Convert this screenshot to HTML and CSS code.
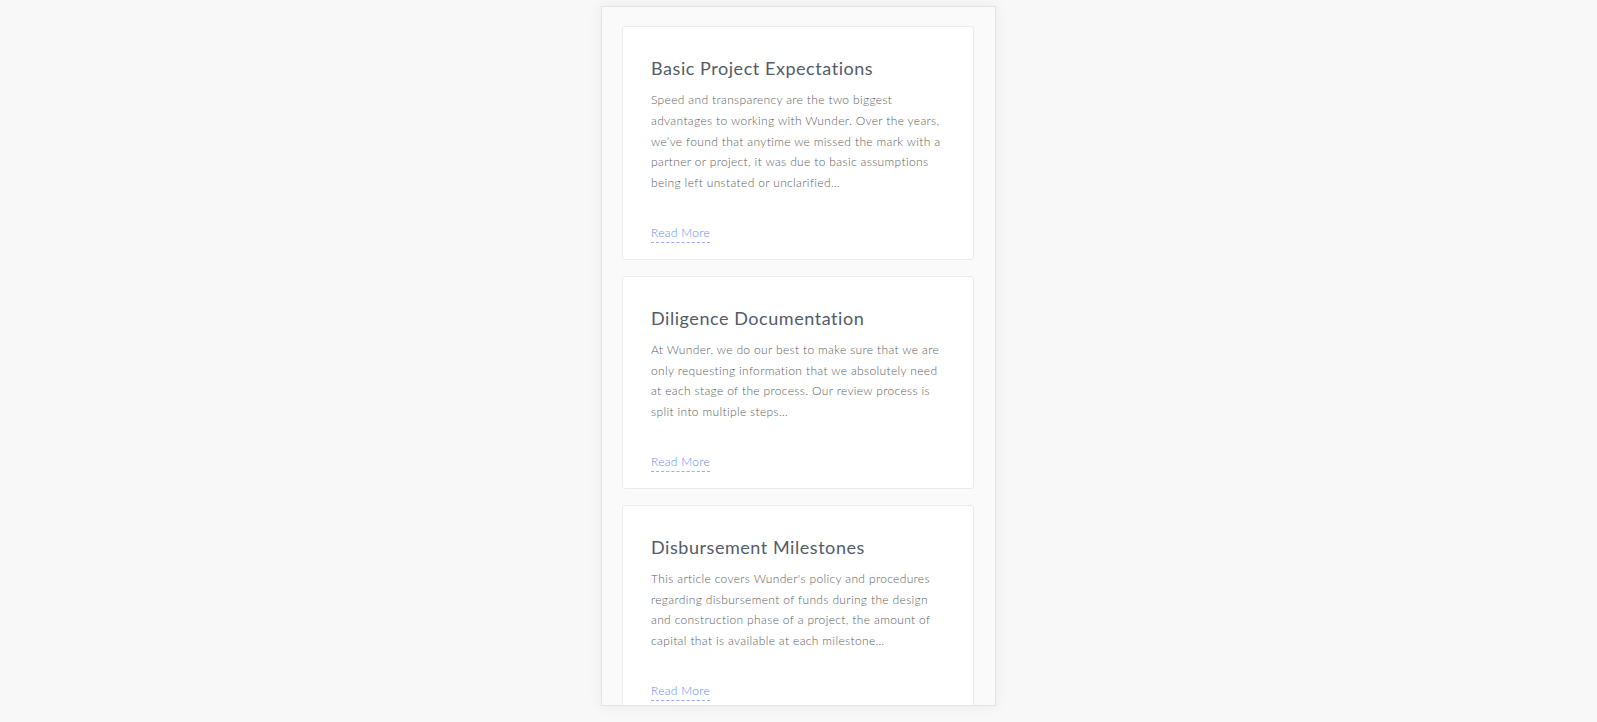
FILE: index.html
```html
<!DOCTYPE html>
<html lang="en">
<head>
<meta charset="utf-8">
<title>Articles</title>
<link rel="stylesheet" href="styles.css">
</head>
<body>
<div class="panel">
  <article class="card">
    <h2 class="card-title">Basic Project Expectations</h2>
    <p class="card-text">Speed and transparency are the two biggest advantages to working with Wunder. Over the years, we’ve found that anytime we missed the mark with a partner or project, it was due to basic assumptions being left unstated or unclarified…</p>
    <a class="read-more" href="#">Read More</a>
  </article>
  <article class="card">
    <h2 class="card-title">Diligence Documentation</h2>
    <p class="card-text">At Wunder, we do our best to make sure that we are only requesting information that we absolutely need at each stage of the process. Our review process is split into multiple steps…</p>
    <a class="read-more" href="#">Read More</a>
  </article>
  <article class="card">
    <h2 class="card-title">Disbursement Milestones</h2>
    <p class="card-text">This article covers Wunder's policy and procedures regarding disbursement of funds during the design and construction phase of a project, the amount of capital that is available at each milestone…</p>
    <a class="read-more" href="#">Read More</a>
  </article>
</div>
</body>
</html>
```
FILE: styles.css
```css
html, body {
  margin: 0;
  padding: 0;
  height: 100%;
  background: #f8f8f8;
}
body {
  font-family: "Lato", "Liberation Sans", sans-serif;
  overflow: hidden;
}
.panel {
  box-sizing: border-box;
  width: 395px;
  height: 700px;
  margin: 6px auto 0;
  background: #fafafa;
  border: 1px solid #e3e3e3;
  box-shadow: 0 0 14px rgba(0, 0, 0, 0.06);
  padding: 19px 21px 0 20px;
  display: flex;
  flex-direction: column;
  gap: 16px;
  overflow: hidden;
}
.card {
  flex: none;
  background: #fff;
  border: 1px solid #ebebeb;
  border-radius: 3px;
  padding: 28px 28px 16px;
  display: flex;
  flex-direction: column;
  align-items: flex-start;
}
.card-title {
  margin: 0;
  font-family: "Lato", sans-serif;
  font-weight: 400;
  font-size: 18px;
  line-height: 27px;
  letter-spacing: 0.55px;
  color: #535b68;
}
.card-text {
  margin: 8px 0 0;
  font-family: "Lato", sans-serif;
  font-weight: 300;
  font-size: 12px;
  line-height: 20.75px;
  letter-spacing: 0.35px;
  color: #5e5e5e;
}
.read-more {
  margin-top: 31px;
  font-family: "Lato", sans-serif;
  font-weight: 300;
  font-size: 12px;
  line-height: 16px;
  letter-spacing: 0.3px;
  color: #5a8def;
  text-decoration: none;
  border-bottom: 1px dashed #8fb2f5;
  padding-bottom: 1px;
}
```
